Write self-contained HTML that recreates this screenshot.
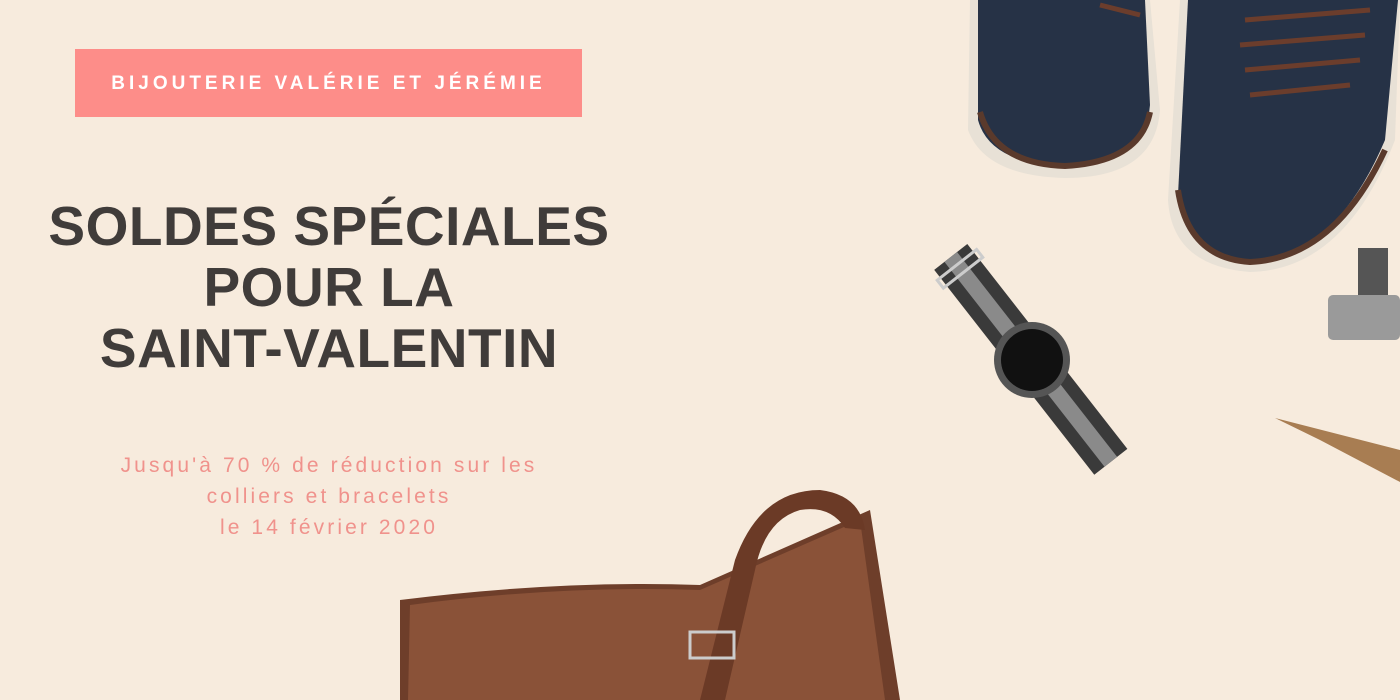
<!DOCTYPE html>
<html><head><meta charset="utf-8"><style>
html,body{margin:0;padding:0}
body{width:1400px;height:700px;background:#f7ebdd;position:relative;overflow:hidden;font-family:"Liberation Sans",sans-serif}
.tag{position:absolute;left:75px;top:49px;width:507px;height:68px;background:#fd8d89;color:#fff;font-weight:bold;font-size:19px;letter-spacing:4px;display:flex;align-items:center;justify-content:center;padding-top:2px;box-sizing:border-box}
h1{position:absolute;left:0;top:196px;width:658px;margin:0;text-align:center;color:#403c3a;font-size:55px;line-height:61px;font-weight:bold;letter-spacing:0.5px}
.sub{position:absolute;left:0;top:450px;width:658px;text-align:center;color:#f0928c;font-size:21px;line-height:31px;letter-spacing:3.1px}
svg{position:absolute;left:0;top:0}
</style></head><body>
<svg width="1400" height="700">
<path d="M970 0 L1150 0 L1160 110 Q1155 178 1065 178 Q985 176 968 130 Z" fill="#e8e1d6"/>
<path d="M978 0 L1145 0 L1150 105 Q1145 165 1065 166 Q990 164 978 120 Z" fill="#263246"/>
<path d="M980 112 Q995 164 1065 166 Q1140 162 1150 112" fill="none" stroke="#5a3a2c" stroke-width="6"/>
<path d="M1180 0 L1400 0 L1395 140 Q1345 270 1250 272 Q1172 266 1168 200 Z" fill="#e8e1d6"/>
<path d="M1188 0 L1398 0 L1385 140 Q1335 258 1250 262 Q1182 255 1178 195 Z" fill="#263246"/>
<path d="M1178 190 Q1188 258 1250 262 Q1335 258 1385 150" fill="none" stroke="#5a3a2c" stroke-width="6"/>
<g stroke="#6b3d2c" stroke-width="5" fill="none"><path d="M1245 20 L1370 10 M1240 45 L1365 35 M1245 70 L1360 60 M1250 95 L1350 85 M1100 5 L1140 15"/></g>
<rect x="1328" y="295" width="72" height="45" rx="5" fill="#9a9a9a"/>
<rect x="1358" y="248" width="30" height="47" fill="#555"/>
<path d="M1275 418 L1400 450 L1400 482 L1320 440 Z" fill="#a87d52"/>
<g transform="rotate(-38 1030 360)">
<rect x="1010" y="230" width="42" height="260" fill="#3a3a3a"/>
<rect x="1023" y="230" width="16" height="260" fill="#8a8a8a"/>
<rect x="1006" y="240" width="50" height="10" fill="none" stroke="#ccc" stroke-width="3"/>
</g>
<circle cx="1032" cy="360" r="38" fill="#555"/>
<circle cx="1032" cy="360" r="31" fill="#111"/>
<path d="M400 600 Q560 580 700 585 L870 510 L900 700 L400 700 Z" fill="#6e3e2a"/>
<path d="M410 605 Q560 585 700 590 L860 520 L885 700 L408 700 Z" fill="#8a5238"/>
<path d="M700 700 L735 560 Q760 490 820 490 Q860 495 865 530 L845 528 Q830 505 800 510 Q765 520 755 570 L725 700 Z" fill="#6b3a26"/>
<rect x="690" y="632" width="44" height="26" fill="none" stroke="#ccc" stroke-width="3"/>
</svg>
<div class="tag">BIJOUTERIE VALÉRIE ET JÉRÉMIE</div>
<h1>SOLDES SPÉCIALES<br>POUR LA<br>SAINT-VALENTIN</h1>
<div class="sub">Jusqu'à 70 % de réduction sur les<br>colliers et bracelets<br>le 14 février 2020</div>
</body></html>
